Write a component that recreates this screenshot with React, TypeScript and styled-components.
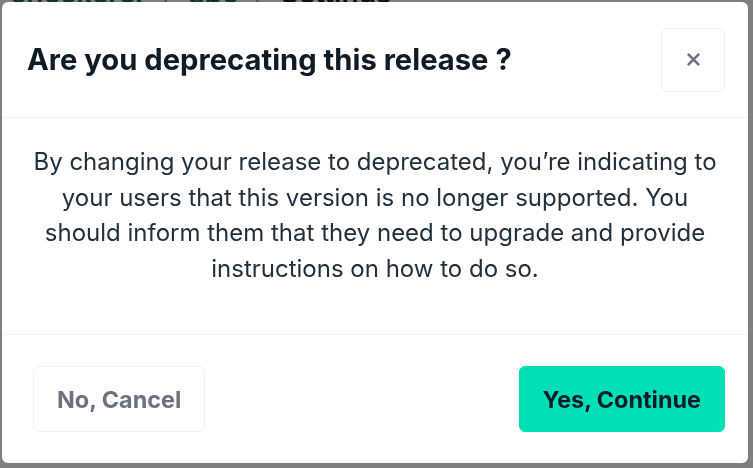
import React from "react";
import styled, { createGlobalStyle } from "styled-components";

const GlobalStyle = createGlobalStyle`
    html, body {
        margin: 0;
        padding: 0;
        width: 100%;
        height: 100%;
        overflow: hidden;
        background: #ffffff;
        font-family: Inter, "Noto Sans", sans-serif;
    }
`;

const Page = styled.div`
    width: 753px;
    height: 468px;
    background: #ffffff;
    overflow: hidden;
`;

const Breadcrumb = styled.nav`
    display: flex;
    align-items: center;
    gap: 16px;
    margin-top: -24px;
    padding-left: 10px;
    font-size: 28px;
    font-weight: 600;
    color: #12222e;

    a {
        color: #0f6b6b;
        text-decoration: none;
    }

    .sep {
        color: #9aa3aa;
        font-weight: 400;
    }
`;

const Overlay = styled.div`
    position: fixed;
    inset: 0;
    background: rgba(0, 0, 0, 0.5);
    display: flex;
    padding: 2px 5px 5px 2px;
    box-sizing: border-box;
`;

const Dialog = styled.div`
    flex: 1;
    display: flex;
    flex-direction: column;
    background: #ffffff;
    border-radius: 6px;
    overflow: hidden;
`;

const Header = styled.header`
    display: flex;
    align-items: center;
    justify-content: space-between;
    height: 116px;
    padding: 0 23px 0 25px;
    border-bottom: 1px solid #f1f2f3;
    box-sizing: border-box;
`;

const Title = styled.h2`
    margin: 0;
    font-size: 29.2px;
    font-weight: 700;
    color: #0f1b26;
`;

const CloseButton = styled.button`
    width: 64px;
    height: 64px;
    display: flex;
    align-items: center;
    justify-content: center;
    background: #ffffff;
    border: 1px solid #eef0f1;
    border-radius: 6px;
    color: #6b7280;
    cursor: pointer;
    padding: 0;
`;

const Body = styled.div`
    flex: 1;
    padding: 26px 30px 0;
    border-bottom: 1px solid #f1f2f3;
`;

const Message = styled.p`
    margin: 0;
    text-align: center;
    font-size: 24px;
    line-height: 35.6px;
    color: #22303c;
`;

const Footer = styled.footer`
    display: flex;
    align-items: center;
    justify-content: space-between;
    height: 128px;
    padding: 0 23px 0 31px;
    box-sizing: border-box;
`;

const Button = styled.button<{ $primary?: boolean }>`
    height: 66px;
    padding: 0 23px;
    border-radius: 6px;
    font-family: Inter, "Noto Sans", sans-serif;
    font-size: 23.4px;
    font-weight: 700;
    cursor: pointer;
    border: 1px solid ${({ $primary }) => ($primary ? "#00dfb6" : "#eef0f1")};
    background: ${({ $primary }) => ($primary ? "#00dfb6" : "#ffffff")};
    color: ${({ $primary }) => ($primary ? "#0f1b26" : "#6b7280")};
`;

const CloseIcon = () => (
    <svg width="13" height="13" viewBox="0 0 12 12" fill="none">
        <path d="M1.5 1.5L10.5 10.5M10.5 1.5L1.5 10.5" stroke="currentColor" strokeWidth="2.4" strokeLinecap="round" />
    </svg>
);

const App = () => {
    return (
        <>
            <GlobalStyle />
            <Page>
                <Breadcrumb>
                    <a href="#">checkerer</a>
                    <span className="sep">/</span>
                    <a href="#">abc</a>
                    <span className="sep">/</span>
                    <span>Settings</span>
                </Breadcrumb>
            </Page>
            <Overlay>
                <Dialog role="dialog">
                    <Header>
                        <Title>Are you deprecating this release ?</Title>
                        <CloseButton aria-label="Close">
                            <CloseIcon />
                        </CloseButton>
                    </Header>
                    <Body>
                        <Message>
                            By changing your release to deprecated, you’re indicating to your users that this
                            version is no longer supported. You should inform them that they need to upgrade and
                            provide instructions on how to do so.
                        </Message>
                    </Body>
                    <Footer>
                        <Button>No, Cancel</Button>
                        <Button $primary>Yes, Continue</Button>
                    </Footer>
                </Dialog>
            </Overlay>
        </>
    );
};

export default App;
